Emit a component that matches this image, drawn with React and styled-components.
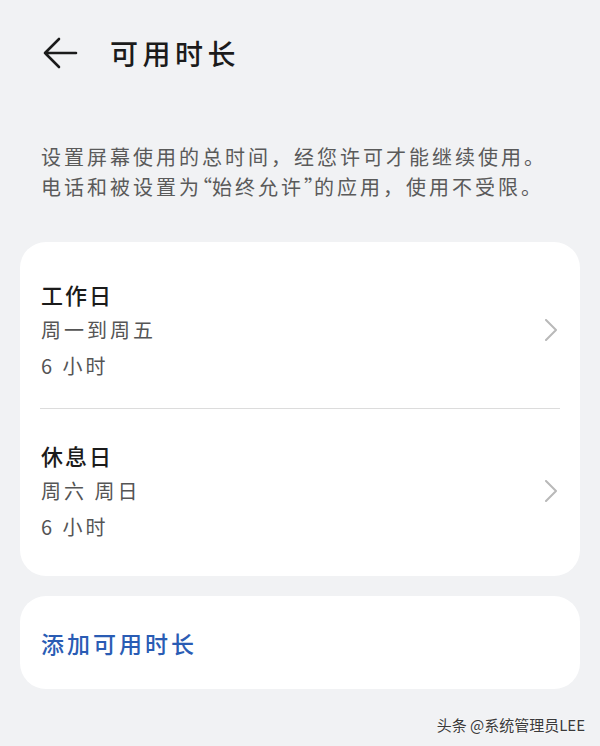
import React from 'react';
import styled, { createGlobalStyle } from 'styled-components';

const GlobalStyle = createGlobalStyle`
    body {
        margin: 0;
        background: #f1f2f4;
        font-family: "Noto Sans CJK SC", "Noto Sans", sans-serif;
    }
`;

const Page = styled.div`
    min-height: 746px;
    padding: 0 20px;
    box-sizing: border-box;
    background: #f1f2f4;
`;

const Header = styled.div`
    height: 106px;
    display: flex;
    align-items: center;
    padding-left: 22px;
    gap: 32px;
`;

const BackButton = styled.button`
    display: flex;
    align-items: center;
    padding: 0;
    border: 0 none;
    background: none;
    cursor: pointer;
`;

const Title = styled.h1`
    margin: 0;
    font-size: 28px;
    font-weight: 500;
    letter-spacing: 4.5px;
    line-height: 34px;
    color: #1b1b1b;
`;

const Description = styled.p`
    margin: 36px 0 0;
    padding-left: 21px;
    font-size: 20px;
    line-height: 30px;
    letter-spacing: 3px;
    color: #5a5a5a;
`;

// narrow quote marks, like the reference's half-width punctuation
const Quote = styled.span`
    font-feature-settings: "halt";
    letter-spacing: 0;
`;

const Card = styled.div`
    margin-top: ${p => p.$gap}px;
    background: #fff;
    border-radius: 26px;
    padding: ${p => p.$pad};
`;

const Row = styled.div`
    display: flex;
    align-items: center;
    justify-content: space-between;
    padding: 29px 2px 25px 1px;
    & + & {
        border-top: 1px solid #dcdcdc;
    }
`;

const RowText = styled.div`
    display: flex;
    flex-direction: column;
`;

const RowTitle = styled.div`
    font-size: 22px;
    font-weight: 500;
    letter-spacing: 2px;
    line-height: 34px;
    color: #1b1b1b;
`;

const RowSub = styled.div`
    font-size: 20px;
    letter-spacing: 3px;
    line-height: ${p => p.$lh}px;
    color: #555;
`;

const AddLink = styled.div`
    height: 93px;
    display: flex;
    align-items: center;
    padding-left: 21px;
    font-size: 23px;
    font-weight: 500;
    letter-spacing: 3px;
    color: #2a5cb4;
`;

const Watermark = styled.div`
    margin-top: 26px;
    margin-right: -5px;
    text-align: right;
    font-size: 15px;
    line-height: 20px;
    color: #3a3a3a;
    text-shadow: 0 0 2px #fff;
`;

function Chevron() {
    return (
        <svg width="14" height="22" viewBox="0 0 14 22">
            <path d="M2 1 L12 11 L2 21" fill="none" stroke="#b9b9b9" strokeWidth="2" strokeLinecap="round" strokeLinejoin="round" />
        </svg>
    );
}

const schedules = [
    { title: '工作日', days: '周一到周五', hours: '6 小时' },
    { title: '休息日', days: '周六 周日', hours: '6 小时' },
];

function App() {
    return (
        <Page>
            <GlobalStyle />
            <Header>
                <BackButton aria-label="返回">
                    <svg width="36" height="32" viewBox="0 0 36 32">
                        <path d="M3 16 H34 M17 2 L3 16 L17 30" fill="none" stroke="#1b1b1b" strokeWidth="2.6" strokeLinecap="round" strokeLinejoin="round" />
                    </svg>
                </BackButton>
                <Title>可用时长</Title>
            </Header>
            <Description>
                设置屏幕使用的总时间，经您许可才能继续使用。<br />
                电话和被设置为<Quote>“</Quote>始终允许<Quote>”</Quote>的应用，使用不受限。
            </Description>
            <Card $gap={40} $pad="6px 20px 7px">
                {schedules.map(s => (
                    <Row key={s.title}>
                        <RowText>
                            <RowTitle>{s.title}</RowTitle>
                            <RowSub $lh={38}>{s.days}</RowSub>
                            <RowSub $lh={34}>{s.hours}</RowSub>
                        </RowText>
                        <Chevron />
                    </Row>
                ))}
            </Card>
            <Card $gap={20} $pad="0">
                <AddLink>添加可用时长</AddLink>
            </Card>
            <Watermark>头条 @系统管理员LEE</Watermark>
        </Page>
    );
}

export default App;
